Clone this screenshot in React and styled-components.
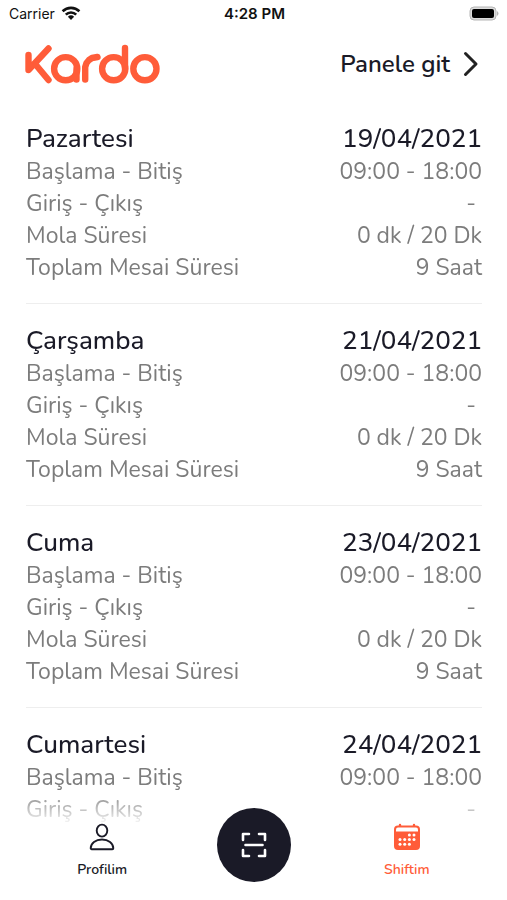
import React from 'react';
import styled, { createGlobalStyle } from 'styled-components';

const GlobalStyle = createGlobalStyle`
  * {
    box-sizing: border-box;
  }

  body {
    margin: 0;
    background-color: #fff;
    color: #1a1a27;
    font-family: Nunito, "Noto Sans", "Open Sans", sans-serif;
  }
`;

const Screen = styled.div`
  display: flex;
  flex-direction: column;
  height: 100vh;
  overflow: hidden;
`;

const StatusBar = styled.div`
  display: grid;
  grid-template-columns: 1fr auto 1fr;
  align-items: center;
  height: 26px;
  padding: 0 7px 0 9px;
  color: #111;
  font-family: Inter, sans-serif;
  font-size: 14px;
`;

const Carrier = styled.div`
  display: flex;
  align-items: center;
  gap: 6px;
`;

const Clock = styled.div`
  font-size: 15px;
  font-weight: 600;
`;

const Battery = styled.svg`
  justify-self: end;
`;

const Header = styled.header`
  display: flex;
  align-items: center;
  justify-content: space-between;
  height: 76px;
  padding: 0 28px 0 25px;
`;

const PanelLink = styled.a`
  display: flex;
  align-items: center;
  gap: 13px;
  color: #1a1a27;
  font-size: 24px;
  font-weight: 600;
  line-height: 32px;
  text-decoration: none;
`;

const ShiftList = styled.main`
  flex: 1;
  min-height: 0;
  padding: 0 25px 0 26px;
  overflow-y: auto;
  scrollbar-width: none;
  mask-image: linear-gradient(to bottom, #000 calc(100% - 36px), transparent);
`;

const Shift = styled.section`
  padding: 20px 0 19px;
  border-bottom: 1px solid #eee;

  &:last-child {
    padding-bottom: 0;
    border-bottom: 0;
  }
`;

const ShiftTitle = styled.div`
  display: flex;
  justify-content: space-between;
  font-size: 26px;
  font-weight: 500;
  line-height: 34px;
`;

const Day = styled.h2`
  margin: 0;
  font-size: inherit;
  font-weight: inherit;
`;

const Details = styled.dl`
  margin: 0;
`;

const Detail = styled.div`
  display: flex;
  justify-content: space-between;
  color: #7c7c7c;
  font-size: 23px;
  line-height: 32px;
`;

const Value = styled.dd`
  margin: 0;
  padding-right: ${({ $empty }) => ($empty ? '6px' : '0')};
`;

const TabBar = styled.nav`
  display: grid;
  grid-template-columns: repeat(3, 1fr);
  flex-shrink: 0;
  align-items: start;
  justify-items: center;
  height: 77px;
  margin-top: -3px;
  padding: 0 24px 0 26px;
`;

const Tab = styled.a`
  display: flex;
  flex-direction: column;
  align-items: center;
  gap: 9px;
  color: ${({ $active }) => ($active ? '#ff5c39' : '#1a1a27')};
  font-size: 14px;
  font-weight: 600;
  line-height: 20px;
  text-decoration: none;
`;

const ScanButton = styled.button`
  display: grid;
  place-items: center;
  width: 74px;
  height: 74px;
  margin-top: -15px;
  padding: 0;
  border: 0;
  border-radius: 50%;
  background-color: #1a1a27;
  color: #fff;
  z-index: 1;
`;

const KardoLogo = () => (
  <svg width="135" height="40" viewBox="25 43 135 40" fill="none" stroke="#ff5c39" strokeWidth="6.4" strokeLinecap="round" strokeLinejoin="round" role="img" aria-label="Kardo">
    <polyline points="28.5,54 28.5,69 48.5,47.5" />
    <line x1="36" y1="64" x2="48.5" y2="79" />
    <circle cx="65.7" cy="67.7" r="11.6" />
    <line x1="76.5" y1="68" x2="76.5" y2="78.5" />
    <polyline points="85.2,78.5 85.2,66 86.5,62 89,59 92,57 97.5,56" />
    <circle cx="113.7" cy="67.7" r="11.6" />
    <line x1="125" y1="47" x2="125" y2="68" />
    <circle cx="144.9" cy="67.7" r="11.6" />
  </svg>
);

const WifiIcon = () => (
  <svg width="20" height="14" viewBox="0 0 20 14" fill="none" stroke="#111" strokeWidth="2.6" aria-hidden="true">
    <path d="M1.6 5.3a12 12 0 0 1 16.8 0M4.8 8.6a7.4 7.4 0 0 1 10.4 0" />
    <path d="M6.9 10.8a4.5 4.5 0 0 1 6.2 0L10 14z" fill="#111" stroke="none" />
  </svg>
);

const BatteryIcon = () => (
  <Battery width="31" height="15" viewBox="0 0 31 15" aria-hidden="true">
    <rect x="1" y="1" width="26" height="13" rx="4" fill="#ddd" stroke="#b5b5b5" />
    <rect x="3" y="3" width="22" height="9" rx="2" fill="#000" />
    <path d="M28 5q3 2.5 0 5z" fill="#b5b5b5" />
  </Battery>
);

const ChevronIcon = () => (
  <svg width="16" height="26" viewBox="0 0 16 26" fill="none" stroke="#222" strokeWidth="3" strokeLinecap="round" strokeLinejoin="round" aria-hidden="true">
    <path d="M2.5 2.5 13 13 2.5 23.5" />
  </svg>
);

const ProfileIcon = () => (
  <svg width="26" height="28" viewBox="0 0 26 28" fill="none" stroke="currentColor" strokeWidth="1.9" strokeLinejoin="round" aria-hidden="true">
    <ellipse cx="13" cy="7.6" rx="5.3" ry="6" />
    <path d="M2.7 26.2a1 1 0 0 1-1-1c0-5 5-8.7 11.3-8.7s11.3 3.7 11.3 8.7a1 1 0 0 1-1 1z" />
  </svg>
);

const dots = [
  [16.4, 12], [21, 12],
  [7, 16.6], [11.7, 16.6], [16.4, 16.6], [21, 16.6],
  [7, 21.3], [11.7, 21.3], [16.4, 21.3],
];

const CalendarIcon = () => (
  <svg width="28" height="28" viewBox="0 0 28 28" aria-hidden="true">
    <path d="M7 2v3M21 2v3" stroke="currentColor" strokeWidth="2.4" strokeLinecap="round" />
    <rect x="1" y="2.5" width="26" height="24.5" rx="4" fill="currentColor" />
    <path d="M3 8.5v-2q0-2 2-2h18q2 0 2 2v2z" fill="#fff" />
    {dots.map(([x, y]) => (
      <circle key={`${x}-${y}`} cx={x} cy={y} r="1.5" fill="#fff" />
    ))}
  </svg>
);

const ScanIcon = () => (
  <svg width="26" height="26" viewBox="0 0 26 26" fill="none" stroke="currentColor" strokeWidth="2.6" strokeLinecap="round" strokeLinejoin="round" aria-hidden="true">
    <path d="M2 8V2h6M18 2h6v6M24 18v6h-6M8 24H2v-6M4.5 13h17" />
  </svg>
);

const shifts = [
  { day: 'Pazartesi', date: '19/04/2021', hours: '09:00 - 18:00', entry: '-', rest: '0 dk / 20 Dk', total: '9 Saat' },
  { day: 'Çarşamba', date: '21/04/2021', hours: '09:00 - 18:00', entry: '-', rest: '0 dk / 20 Dk', total: '9 Saat' },
  { day: 'Cuma', date: '23/04/2021', hours: '09:00 - 18:00', entry: '-', rest: '0 dk / 20 Dk', total: '9 Saat' },
  { day: 'Cumartesi', date: '24/04/2021', hours: '09:00 - 18:00', entry: '-' },
];

const fields = [
  { key: 'hours', label: 'Başlama - Bitiş' },
  { key: 'entry', label: 'Giriş - Çıkış' },
  { key: 'rest', label: 'Mola Süresi' },
  { key: 'total', label: 'Toplam Mesai Süresi' },
];

const App = () => (
  <Screen lang="tr">
    <GlobalStyle />
    <StatusBar>
      <Carrier>
        Carrier
        <WifiIcon />
      </Carrier>
      <Clock>4:28 PM</Clock>
      <BatteryIcon />
    </StatusBar>

    <Header>
      <KardoLogo />
      <PanelLink href="#panel">
        Panele git
        <ChevronIcon />
      </PanelLink>
    </Header>

    <ShiftList>
      {shifts.map((shift) => (
        <Shift key={shift.date}>
          <ShiftTitle>
            <Day>{shift.day}</Day>
            <time>{shift.date}</time>
          </ShiftTitle>
          <Details>
            {fields.filter(({ key }) => shift[key]).map(({ key, label }) => (
              <Detail key={key}>
                <dt>{label}</dt>
                <Value $empty={shift[key] === '-'}>{shift[key]}</Value>
              </Detail>
            ))}
          </Details>
        </Shift>
      ))}
    </ShiftList>

    <TabBar>
      <Tab href="#profil">
        <ProfileIcon />
        Profilim
      </Tab>
      <ScanButton type="button" aria-label="Tara">
        <ScanIcon />
      </ScanButton>
      <Tab href="#shift" $active aria-current="page">
        <CalendarIcon />
        Shiftim
      </Tab>
    </TabBar>
  </Screen>
);

export default App;
